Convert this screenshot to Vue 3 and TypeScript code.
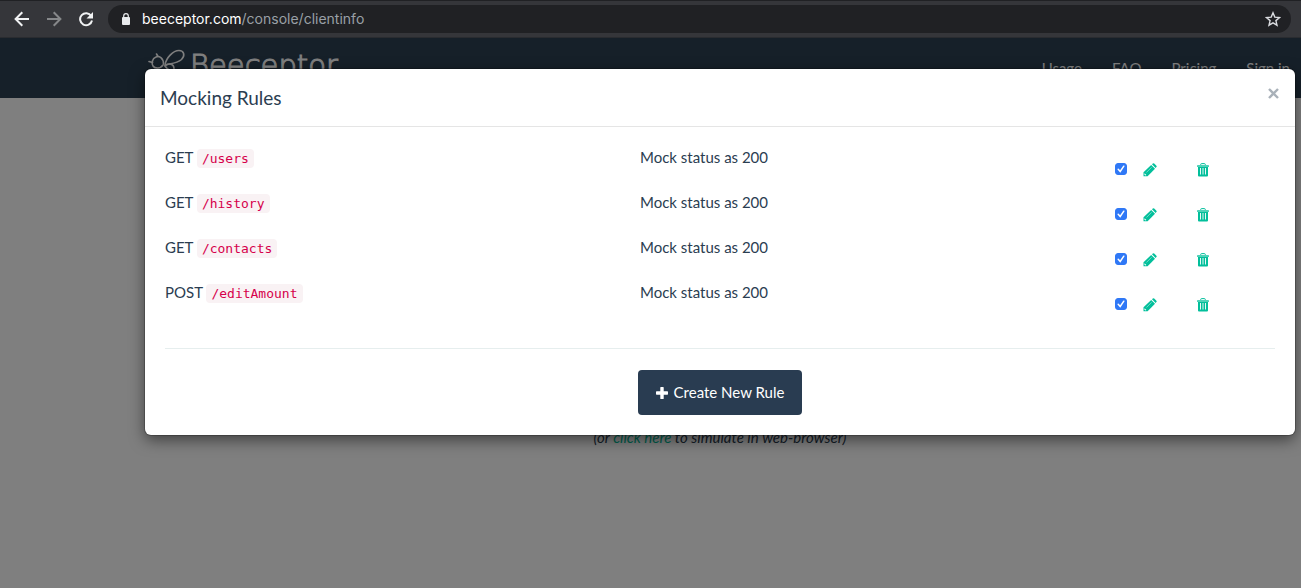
<script setup lang="ts">
import { ref } from 'vue'

interface Rule {
  id: number
  method: string
  path: string
  summary: string
  enabled: boolean
}

const url = ref({ host: 'beeceptor.com', path: '/console/clientinfo' })
const links: string[] = ['Usage', 'FAQ', 'Pricing', 'Sign in']

const rules = ref<Rule[]>([
  { id: 1, method: 'GET', path: '/users', summary: 'Mock status as 200', enabled: true },
  { id: 2, method: 'GET', path: '/history', summary: 'Mock status as 200', enabled: true },
  { id: 3, method: 'GET', path: '/contacts', summary: 'Mock status as 200', enabled: true },
  { id: 4, method: 'POST', path: '/editAmount', summary: 'Mock status as 200', enabled: true },
])
</script>

<template>
  <div class="browser">
    <div class="toolbar">
      <button class="tool" type="button" aria-label="Back">
        <svg width="16" height="16" viewBox="0 0 16 16" fill="none" stroke="#f1f3f4" stroke-width="2">
          <path d="M15 8H2M8.300 1.300L1.600 8l6.700 6.700" />
        </svg>
      </button>
      <button class="tool" type="button" aria-label="Forward">
        <svg width="16" height="16" viewBox="0 0 16 16" fill="none" stroke="#86888a" stroke-width="2">
          <path d="M1 8h13M7.700 1.300L14.400 8l-6.700 6.700" />
        </svg>
      </button>
      <button class="tool" type="button" aria-label="Reload">
        <svg width="16" height="16" viewBox="0 0 16 16">
          <path d="M13.200 5A6 6 0 1 0 14 9.500" fill="none" stroke="#f1f3f4" stroke-width="2" />
          <path d="M15 1v6.500H8.500z" fill="#f1f3f4" />
        </svg>
      </button>
      <div class="address">
        <svg width="10" height="12" viewBox="0 0 10 12">
          <rect x="1" y="4" width="8" height="8" rx="1" fill="#e8eaed" />
          <path d="M2.700 4.500V3a2.300 2.300 0 0 1 4.600 0v1.500" fill="none" stroke="#e8eaed" stroke-width="1.200" />
        </svg>
        <span class="url"><span class="host">{{ url.host }}</span>{{ url.path }}</span>
        <button class="star" type="button" aria-label="Bookmark this page">
          <svg width="16" height="16" viewBox="0 0 16 16">
            <path d="M8 1.800l1.800 4.300 4.700.4-3.600 3.100 1.100 4.600L8 11.800l-4 2.400 1.100-4.600L1.500 6.500l4.700-.4z" fill="none" stroke="#dadce0" stroke-width="1.400" />
          </svg>
        </button>
      </div>
    </div>

    <div class="viewport">
      <header class="navbar">
        <a class="brand" href="#">
          <svg width="38" height="38" viewBox="0 0 38 38" fill="none" stroke="#fff" stroke-width="1.600" stroke-linecap="round">
            <path d="M17 16C18 9 25 1.500 31 1.500c5 0 6.500 5 2.500 9C29 14.500 23 14.500 17 16z" />
            <path d="M17 17c3-3 9-3 9 3 0 4-6 2-9-3z" />
            <path d="M15.500 15C15.500 9 11 6.500 8 8c-4 1.500-4.500 6-3 9 1.500 2.500 7 3.500 10-1" />
            <path d="M10 7.500L8.500 5M4.500 13.500L1 12.500" />
          </svg>
          <span class="wordmark">Beeceptor</span>
        </a>
        <nav class="links">
          <a v-for="link in links" :key="link" href="#">{{ link }}</a>
        </nav>
      </header>
      <main class="content">
        <p class="hint">(or <a href="#">click here</a> to simulate in web-browser)</p>
      </main>

      <div class="backdrop">
        <section class="modal" role="dialog" aria-modal="true" aria-labelledby="rules-title">
          <div class="modal-header">
            <h4 id="rules-title">Mocking Rules</h4>
            <button class="close" type="button" aria-label="Close">
              <svg width="11" height="11" viewBox="0 0 11 11" stroke="#a9b1b9" stroke-width="2.400">
                <path d="M1 1l9 9M10 1l-9 9" />
              </svg>
            </button>
          </div>
          <div class="modal-body">
            <div class="table-wrap">
              <table class="rules">
                <tbody>
                  <tr v-for="rule in rules" :key="rule.id">
                    <td>{{ rule.method }} <code>{{ rule.path }}</code></td>
                    <td>{{ rule.summary }}</td>
                    <td>
                      <div class="actions">
                        <input v-model="rule.enabled" class="check" type="checkbox" :aria-label="`Enable ${rule.path}`" />
                        <button class="icon" type="button" :aria-label="`Edit ${rule.path}`">
                          <svg width="14" height="14" viewBox="0 0 14 14">
                            <path d="M8.200 2L12 5.800 4.600 13.200H.5V9.200z" fill="#02bf9b" />
                            <path d="M9 1.300l.8-.8q.7-.6 1.400 0l2.200 2.200q.6.700 0 1.400l-.8.900z" fill="#02bf9b" />
                            <path d="M3.400 9.500l5.200-5.200" stroke="#8fe3d0" stroke-width=".8" />
                            <path d="M1.600 10.300l1.800 1.800-1.100.3-1-1z" fill="#fff" />
                          </svg>
                        </button>
                        <button class="icon" type="button" :aria-label="`Delete ${rule.path}`">
                          <svg width="12" height="14" viewBox="0 0 12 14">
                            <path d="M3.700 2V1.500q0-.9.9-.9h2.800q.9 0 .9.900V2" fill="none" stroke="#02bf9b" />
                            <path d="M0 2.400q0-.4.400-.4h11.200q.4 0 .4.400V4H0z" fill="#4fd2b8" />
                            <path d="M1 4h10v8.500q0 1-1 1H2q-1 0-1-1z" fill="#02bf9b" />
                            <path d="M3.500 5v6.500M6 5v6.500M8.500 5v6.500" stroke="#e6f9f5" />
                          </svg>
                        </button>
                      </div>
                    </td>
                  </tr>
                </tbody>
              </table>
            </div>
            <hr />
            <div class="footer">
              <button class="create" type="button">
                <svg width="12" height="12" viewBox="0 0 12 12">
                  <path d="M4.900 0h2.200q.6 0 .6.600v3.700h3.700q.6 0 .6.600v2.200q0 .6-.6.600H7.700v3.700q0 .6-.6.600H4.900q-.6 0-.6-.6V7.700H.6Q0 7.700 0 7.100V4.900q0-.6.6-.6h3.700V.6q0-.6.600-.6z" fill="#fff" />
                </svg>
                Create New Rule
              </button>
            </div>
          </div>
        </section>
      </div>
    </div>
  </div>
</template>

<style>
html,
body,
#app {
  height: 100%;
}
body {
  margin: 0;
  background: #808080;
}
</style>

<style scoped>
* {
  box-sizing: border-box;
}
.browser {
  display: flex;
  flex-direction: column;
  min-height: 100%;
  font: 15px/21px Lato, "Liberation Sans", sans-serif;
  color: #2b3d51;
}
button {
  padding: 0;
  border: 0;
  background: none;
  font: inherit;
  cursor: pointer;
}
svg {
  display: block;
  flex: none;
}
a {
  text-decoration: none;
}

.toolbar {
  display: flex;
  align-items: center;
  height: 38px;
  padding: 0 10px 0 14px;
  gap: 16px;
  background: #35363a;
  border-top: 1px solid #202124;
  border-bottom: 1px solid #2a2c30;
}
.address {
  display: flex;
  flex: 1;
  align-items: center;
  gap: 11px;
  height: 28px;
  margin-left: -2px;
  padding: 0 10px 0 13px;
  border-radius: 14px;
  background: #202124;
}
.url {
  flex: 1;
  font-family: Inter, sans-serif;
  font-size: 14px;
  line-height: 20px;
  color: #9aa0a6;
}
.host {
  color: #fff;
}

.viewport {
  position: relative;
  flex: 1;
  background: #fff;
}
.navbar {
  display: flex;
  justify-content: space-between;
  align-items: center;
  height: 60px;
  padding: 0 11px 0 148px;
  background: #2c4053;
}
.brand {
  display: flex;
  align-items: center;
  gap: 4px;
  color: #fff;
}
.wordmark {
  padding-bottom: 6px;
  font-family: "DejaVu Sans", sans-serif;
  font-weight: 200;
  font-size: 29px;
  line-height: 34px;
  -webkit-text-stroke: 1px #fff;
}
.links {
  display: flex;
  gap: 30px;
}
.links a {
  color: #fff;
}
.content {
  margin: 0 6px 0 145px;
  padding-top: 329px;
  text-align: center;
}
.hint {
  margin: 0;
  font-style: italic;
}
.hint a {
  color: #02bf9b;
}

.backdrop {
  position: absolute;
  inset: 0;
  padding: 31px 6px 0 145px;
  background: rgba(0, 0, 0, 0.5);
}
.modal {
  border-radius: 6px;
  background: #fff;
  box-shadow: 0 5px 15px rgba(0, 0, 0, 0.5), 0 0 0 1px rgba(0, 0, 0, 0.2);
}
.modal-header {
  display: flex;
  justify-content: space-between;
  align-items: flex-start;
  padding: 15px;
  border-bottom: 1px solid #e5e5e5;
}
.modal-header h4 {
  margin: 0;
  font-size: 19px;
  font-weight: 400;
  line-height: 27px;
}
.close {
  padding: 4px 1px;
}
.modal-body {
  padding: 20px;
}
.table-wrap {
  margin: 0 -15px;
}
.rules {
  width: 100%;
  border-collapse: collapse;
  table-layout: fixed;
}
.rules td {
  width: calc(100% * 5 / 12);
  height: 45px;
  padding: 0 15px;
  vertical-align: top;
}
.rules td:last-child {
  width: calc(100% / 6);
}
code {
  padding: 2px 5px;
  border-radius: 4px;
  background: #f9f2f4;
  color: #d6004b;
  font-family: "DejaVu Sans Mono", monospace;
  font-size: 13px;
}
.actions {
  display: flex;
  align-items: flex-start;
  padding-top: 16px;
}
.check {
  width: 12px;
  height: 12px;
  margin: 0 16px 0 0;
  appearance: none;
  border-radius: 3px;
  border: 1px solid #2f78f6;
}
.check:checked {
  background: #2f78f6 url("data:image/svg+xml,%3Csvg xmlns='http://www.w3.org/2000/svg' viewBox='0 0 10 10'%3E%3Cpath d='M2.200 5.300l2 2.200L7.800 2.200' fill='none' stroke='%23fff' stroke-width='1.500' stroke-linecap='round'/%3E%3C/svg%3E");
}
.icon + .icon {
  margin-left: 40px;
}
hr {
  margin: 21px 0;
  border: 0;
  border-top: 1px solid #e6eeee;
}
.footer {
  display: flex;
  justify-content: center;
}
.create {
  display: flex;
  align-items: center;
  gap: 6px;
  height: 45px;
  padding: 0 18px;
  border-radius: 4px;
  background: #293c51;
  color: #fff;
}
</style>
